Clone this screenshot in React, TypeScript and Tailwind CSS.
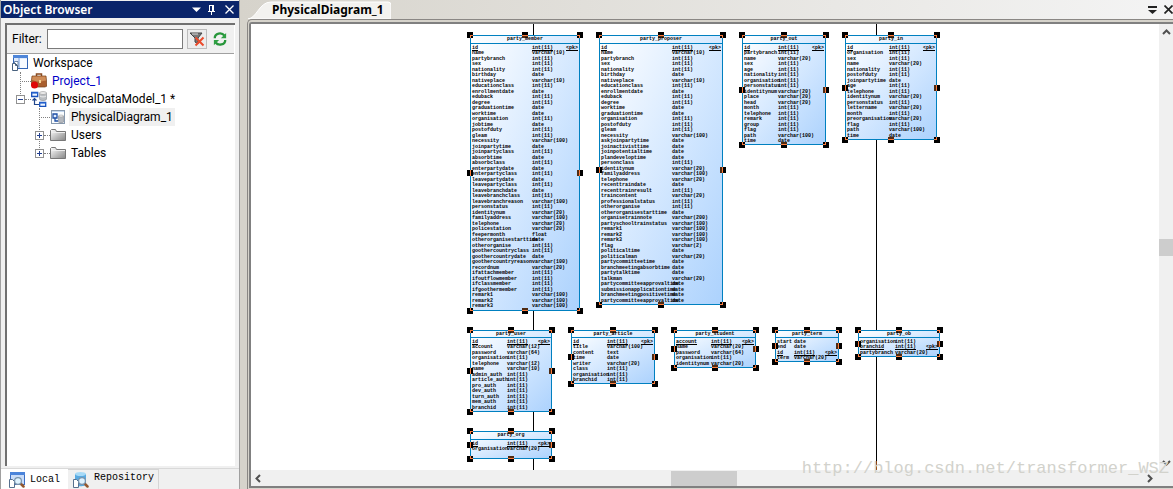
import React from "react";

type Column = { name: string; type: string; pk?: boolean };
type Entity = {
  title: string;
  x: number;
  y: number;
  w: number;
  h: number;
  nameWidth: number;
  compact?: boolean;
  columns: Column[];
};

const TYPES: Record<string, string> = {
  i: "int(11)",
  d: "date",
  f: "float",
  t: "text",
};

// Parses "name:type" pairs; a leading * marks the primary key and a number stands for varchar(n).
const parse = (source: string): Column[] =>
  source
    .trim()
    .split(/\s+/)
    .map((item) => {
      const [rawName, code] = item.split(":");
      return {
        name: rawName.replace("*", ""),
        type: TYPES[code] ?? `varchar(${code})`,
        pk: rawName.startsWith("*"),
      };
    });

const ENTITIES: Entity[] = [
  {
    title: "party_member", x: 219, y: 11, w: 110, h: 276, nameWidth: 60,
    columns: parse(`*id:i name:10 partybranch:i sex:i nationality:i birthday:d nativeplace:10
      educationclass:i enrollmentdate:d eduback:i degree:i graduationtime:d worktime:d organisation:i
      jobtime:d postofduty:i gleam:i necessity:100 joinpartytime:d joinpartyclass:i absorbtime:d
      absorbclass:i enterpartydate:d enterpartyclass:i leavepartydate:d leavepartyclass:i
      leavebranchdate:d leavebranchclass:i leavebranchreason:100 personstatus:i identitynum:20
      familyaddress:100 telephone:20 policestation:20 feepermonth:f otherorganisestarttime:d
      otherorganise:i goothercountryclass:i goothercountrydate:d goothercountryreason:100 recordnum:20
      ifattachmember:i ifoutflowmember:i ifclassmember:i ifgoothermember:i remark1:100 remark2:100
      remark3:100`),
  },
  {
    title: "party_proposer", x: 348, y: 11, w: 124, h: 270, nameWidth: 71,
    columns: parse(`*id:i name:10 partybranch:i sex:i nationality:i birthday:d nativeplace:10
      educationclass:i enrollmentdate:d eduback:i degree:i worktime:d graduationtime:d organisation:i
      postofduty:i gleam:i necessity:100 askjoinpartytime:d joinactivisttime:d joinpotentialtime:d
      plandeveloptime:d personclass:i identitynum:20 familyaddress:100 telephone:20 recenttraindate:d
      recenttrainresult:i traincontent:20 professionalstatus:i otherorganise:i
      otherorganisestarttime:d organisetrainnote:200 partyschooltrainstatus:100 remark1:100
      remark2:100 remark3:100 flag:2 politicaltime:d politicalman:20 partycommitteetime:d
      branchmeetingabsorbtime:d partytalktime:d talkman:20 partycommitteeapprovaltime:d
      submissionapplicationtime:d branchmeetingpositivetime:d partycommitteeapprovaltime:d`),
  },
  {
    title: "party_out", x: 491, y: 11, w: 84, h: 110, nameWidth: 34,
    columns: parse(`*id:i partybranch:i name:20 sex:i age:i nationality:i organisation:i personstatus:i
      identitynum:20 place:20 head:20 month:i telephone:i remark:i group:i flag:i path:100 time:d`),
  },
  {
    title: "party_in", x: 594, y: 11, w: 92, h: 105, nameWidth: 42,
    columns: parse(`*id:i organisation:i sex:i name:20 nationality:i postofduty:i joinpartytime:d age:i
      telephone:i identitynum:20 personstatus:i lettername:20 month:i preorganisation:20 flag:i
      path:100 time:d`),
  },
  {
    title: "party_user", x: 219, y: 306, w: 82, h: 82, nameWidth: 35, compact: true,
    columns: parse(`*id:i account:12 password:64 organisation:i telephone:12 name:10 admin_auth:i
      article_auth:i pro_auth:i dev_auth:i turn_auth:i mem_auth:i branchid:i`),
  },
  {
    title: "party_article", x: 320, y: 306, w: 84, h: 54, nameWidth: 34, compact: true,
    columns: parse(`*id:i title:100 content:t time:d writer:20 class:i organisation:i branchid:i`),
  },
  {
    title: "party_student", x: 423, y: 306, w: 82, h: 38, nameWidth: 35, compact: true,
    columns: parse(`*account:i name:20 password:64 organisation:i identitynum:20`),
  },
  {
    title: "party_term", x: 524, y: 306, w: 64, h: 32, nameWidth: 17, compact: true,
    columns: parse(`start:d end:d *id:i term:20`),
  },
  {
    title: "party_ob", x: 607, y: 306, w: 82, h: 27, nameWidth: 35, compact: true,
    columns: parse(`organisation:i *branchid:i partybranch:20`),
  },
  {
    title: "party_org", x: 219, y: 407, w: 82, h: 28, nameWidth: 35,
    columns: parse(`*id:i organisation:20`),
  },
];

function Handles() {
  const base = "absolute size-[6px] bg-black";
  return (
    <>
      <i className={`${base} -left-[4px] -top-[4px]`}><b className="absolute bottom-0 right-0 size-[3px] border-t border-l border-[#ff7f3f]" /></i>
      <i className={`${base} -right-[4px] -top-[4px]`}><b className="absolute bottom-0 left-0 size-[3px] border-t border-r border-[#ff7f3f]" /></i>
      <i className={`${base} -bottom-[4px] -left-[4px]`}><b className="absolute right-0 top-0 size-[3px] border-b border-l border-[#ff7f3f]" /></i>
      <i className={`${base} -bottom-[4px] -right-[4px]`}><b className="absolute left-0 top-0 size-[3px] border-r border-b border-[#ff7f3f]" /></i>
      <i className={`${base} -top-[4px] left-1/2 -ml-[3px]`}><b className="absolute bottom-[2px] left-0 h-px w-full bg-[#ff7f3f]" /><b className="absolute bottom-0 left-0 h-[2px] w-full bg-[#4f2b12]" /></i>
      <i className={`${base} -bottom-[4px] left-1/2 -ml-[3px]`}><b className="absolute left-0 top-[2px] h-px w-full bg-[#ff7f3f]" /><b className="absolute left-0 top-0 h-[2px] w-full bg-[#4f2b12]" /></i>
      <i className={`${base} -left-[4px] top-1/2 -mt-[3px]`}><b className="absolute right-[2px] top-0 h-full w-px bg-[#ff7f3f]" /></i>
      <i className={`${base} -right-[4px] top-1/2 -mt-[3px]`}><b className="absolute left-[2px] top-0 h-full w-px bg-[#ff7f3f]" /><b className="absolute left-0 top-0 h-full w-[2px] bg-[#4f2b12]" /></i>
    </>
  );
}

function EntityNode({ entity }: { entity: Entity }) {
  return (
    <article
      className="absolute border border-[#0080c0] bg-linear-to-br from-white to-[#acd2fd] font-['Liberation_Mono',monospace] text-[5px] leading-[5px] font-bold whitespace-nowrap text-black"
      style={{ left: entity.x, top: entity.y, width: entity.w, height: entity.h }}
    >
      <Handles />
      <h2 className={`relative border-b border-[#0080c0] pt-px text-center ${entity.compact ? "h-[7px]" : "h-[8px]"}`}>
        {entity.title}
      </h2>
      <ul className="relative px-px pt-[2px]">
        {entity.columns.map((column, index) => (
          <li
            key={index}
            className={`grid odd:h-[5px] even:h-[6px] ${column.pk ? "underline" : ""}`}
            style={{ gridTemplateColumns: `${entity.nameWidth}px 1fr auto` }}
          >
            <span>{column.name}</span>
            <span>{column.type}</span>
            {column.pk && <span>&lt;pk&gt;</span>}
          </li>
        ))}
      </ul>
    </article>
  );
}

function WorkspaceIcon() {
  return (
    <svg className="size-4 shrink-0" viewBox="0 0 16 16">
      <rect x="1.5" y=".5" width="14" height="13" fill="#dfeafb" stroke="#3465b4" />
      <path d="M1 0h15v3H1z" fill="#4f86d9" />
      <path d="M7 3v10" stroke="#7ca3dd" />
      <path d="M8 4h7v9H8z" fill="#f8fbff" />
      <path d="M2.5 6.5H6V12H2.500z" fill="#fff" stroke="#6d87a8" />
      <path d="M.5 8.500h3l2 2v5h-5z" fill="#fff" stroke="#48617e" />
      <path d="M3.500 8.500v2h2" fill="none" stroke="#48617e" />
    </svg>
  );
}

function BriefcaseIcon() {
  return (
    <svg className="size-4 shrink-0" viewBox="0 0 16 16">
      <path d="M5.500 3V1h5v2" fill="none" stroke="#8b4b21" strokeWidth="1.500" />
      <path d="M1 3h14l1 10-2 1H3L0 12z" fill="#a95f2e" stroke="#744018" strokeWidth=".7" />
      <path d="M1.500 3.500h13l.5 4-5 1H6L1 7z" fill="#cf8d58" />
      <rect x="8" y="7" width="2" height="3" fill="#f3d693" />
      <circle cx="3.500" cy="12" r="3.500" fill="#df0808" />
    </svg>
  );
}

function ModelIcon() {
  return (
    <svg className="size-4 shrink-0" viewBox="0 0 16 16">
      <path d="M8.500 2v6c0 2 7 2 7 0V2z" fill="#b9bdc1" stroke="#878b90" strokeWidth=".6" />
      <ellipse cx="12" cy="2" rx="3.500" ry="1.500" fill="#ececec" stroke="#999" strokeWidth=".6" />
      <path d="M9 5c1 1.200 5 1.200 6 0" fill="none" stroke="#eee" />
      <path d="M.7 1.500h6v4h-6zM8.700 11.500h6v4h-6z" fill="#eef5ff" stroke="#1751bd" strokeWidth="1.300" />
      <path d="M1 2h6M9 12h6" stroke="#2f6fd8" />
      <path d="M3.500 7v6.500H8M1.500 9.500l2-2 2 2" fill="none" stroke="#21468b" strokeWidth="1.200" />
    </svg>
  );
}

function DiagramIcon() {
  return (
    <svg className="size-4 shrink-0" viewBox="0 0 16 16">
      <rect x="1.500" y="1.500" width="13" height="13" fill="#fafdff" stroke="#8799ae" />
      <path d="M2 2.500h12" stroke="#c3d6ee" />
      <path d="M3 5h4v4H3zM5 9v3h3" fill="#e3efff" stroke="#1d4ea5" strokeWidth="1.300" />
      <path d="M8.500 7v6c0 1.300 5 1.300 5 0V7z" fill="#b4b8be" stroke="#858a92" strokeWidth=".6" />
      <ellipse cx="11" cy="7" rx="2.500" ry="1" fill="#eee" stroke="#999" strokeWidth=".5" />
    </svg>
  );
}

function FolderIcon() {
  return (
    <svg className="size-4 shrink-0" viewBox="0 0 16 16">
      <defs>
        <linearGradient id="folder" x2="1" y2="1">
          <stop stopColor="#fff" />
          <stop offset="1" stopColor="#858585" />
        </linearGradient>
      </defs>
      <path d="M.5 13.500v-10l1-1h4l1 2h9v9z" fill="url(#folder)" stroke="#777" />
      <path d="M1 5.500h14" stroke="#eee" />
    </svg>
  );
}

function SearchTabIcon({ repository }: { repository?: boolean }) {
  return (
    <svg className="size-4 shrink-0" viewBox="0 0 16 16">
      {repository ? (
        <>
          <path d="M2 2v10c0 3 11 3 11 0V2z" fill="#58a9e0" />
          <ellipse cx="7.500" cy="2" rx="5.500" ry="2" fill="#a7daf7" />
        </>
      ) : (
        <>
          <rect x="1.500" y=".5" width="14" height="12" fill="#c9dcf8" stroke="#3c6fc4" />
          <path d="M1 0h15v3H1z" fill="#4b84da" />
        </>
      )}
      <path d="M.5 7.500h3l2 2v6h-5z" fill="#fff" stroke="#57718f" />
      <path d="m11.500 11.500 3 3" stroke="#94582f" strokeWidth="2.500" strokeLinecap="round" />
      <circle cx="9" cy="9" r="3.400" fill="#dff3ff" stroke="#7892aa" strokeWidth="1.200" />
    </svg>
  );
}

function Expander({ open }: { open?: boolean }) {
  return (
    <button aria-label={open ? "Collapse" : "Expand"} className="size-[9px] shrink-0">
      <svg className="size-[9px]" viewBox="0 0 9 9">
        <rect x=".5" y=".5" width="8" height="8" fill="#fff" stroke="#919191" />
        <path d={open ? "M2 4.500h5" : "M2 4.500h5M4.500 2v5"} stroke="#223f8f" />
      </svg>
    </button>
  );
}

function Tree() {
  const row = "flex h-[18px] items-center";
  const dots = "border-t border-dotted border-[#808080]";
  return (
    <ul className="relative pl-[5px] font-['Roboto',sans-serif] text-[12px] whitespace-nowrap text-black">
      <li className={row}><WorkspaceIcon /><span className="ml-[5px]">Workspace</span></li>
      <li className={`${row} pl-[8px]`}><i className={`${dots} w-[11px]`} /><BriefcaseIcon /><span className="ml-[5px] text-[#0000c8]">Project_1</span></li>
      <li className={`${row} pl-[4px]`}><Expander open /><i className={`${dots} w-[6px]`} /><ModelIcon /><span className="ml-[5px]">PhysicalDataModel_1 *</span></li>
      <li className={`${row} pl-[27px]`}><i className={`${dots} w-[11px]`} /><DiagramIcon /><span className="ml-[3px] bg-[#f0f0f0] px-[2px] leading-[18px]">PhysicalDiagram_1</span></li>
      <li className={`${row} pl-[23px]`}><Expander /><i className={`${dots} w-[6px]`} /><FolderIcon /><span className="ml-[5px]">Users</span></li>
      <li className={`${row} pl-[23px]`}><Expander /><i className={`${dots} w-[6px]`} /><FolderIcon /><span className="ml-[5px]">Tables</span></li>
      <li aria-hidden="true" className="absolute top-[18px] left-[13px] h-[24px] border-l border-dotted border-[#808080]" />
      <li aria-hidden="true" className="absolute top-[54px] left-[32px] h-[24px] border-l border-dotted border-[#808080]" />
      <li aria-hidden="true" className="absolute top-[87px] left-[32px] h-[9px] border-l border-dotted border-[#808080]" />
    </ul>
  );
}

function ObjectBrowser() {
  return (
    <aside className="flex w-[240px] shrink-0 flex-col border-r border-l border-[#a0a0a0] bg-[#f0f0f0] pt-px">
      <header className="flex h-[17px] items-center bg-[#0a246a] pr-[4px] pl-[2px] text-white">
        <h1 className="flex-1 text-[12px] leading-[17px] font-semibold">Object Browser</h1>
        <button aria-label="Window menu" className="mr-[6px]"><svg className="h-[9px] w-[9px]" viewBox="0 0 9 9"><path d="M0 2.500h9L4.500 7z" fill="#fff" /></svg></button>
        <button aria-label="Pin" className="mr-[8px]"><svg className="h-[11px] w-[9px]" viewBox="0 0 9 11"><path d="M2.500 1v6M6.500 1v6M2 1.500h5M1 7.500h7M4.500 8v3M5.500 1v6" stroke="#fff" fill="none" /></svg></button>
        <button aria-label="Close"><svg className="size-[11px]" viewBox="0 0 11 11"><path d="m1.500 1.500 8 8m0-8-8 8" stroke="#fff" strokeWidth="1.300" /></svg></button>
      </header>
      <div className="mr-[4px] ml-[4px] mt-[5px] flex flex-1 flex-col border-t-2 border-l-2 border-[#707070] bg-white">
        <div className="mr-px flex h-[29px] items-center border-b border-[#a0a0a0] bg-[#f0f0f0] pl-[5px] text-[12px]">
          <label htmlFor="filter" className="w-[35px] font-['Roboto',sans-serif]">Filter:</label>
          <input id="filter" type="text" className="h-[20px] min-w-0 flex-1 border border-[#7a7a7a] bg-white px-1 outline-none" />
          <button aria-label="Clear filter" className="ml-[4px] flex size-5 items-center justify-center border border-[#bcbcbc] bg-[#ececec]">
            <svg className="size-4" viewBox="0 0 16 16">
              <path d="M1 2h12L9 7v6l-3-2V7z" fill="#777" stroke="#444" />
              <path d="M3 3h6" stroke="#ddd" />
              <path d="m6.500 6.500 8 8m0-8-8 8" stroke="#ea4a2a" strokeWidth="2" />
            </svg>
          </button>
          <button aria-label="Refresh" className="mr-[6px] ml-[4px] flex size-[17px] items-center justify-center">
            <svg className="size-[14px]" viewBox="0 0 16 16">
              <path d="M2 7c0-6 8-7 11-3M14 9c0 6-8 7-11 3" fill="none" stroke="#27963a" strokeWidth="2.600" />
              <path d="M15 1v6H9zM1 15V9h6z" fill="#2fa043" />
            </svg>
          </button>
        </div>
        <Tree />
      </div>
      <nav className="mt-[2px] flex h-[21px] shrink-0 border-t border-[#d9d9d9] font-['Liberation_Mono',monospace] text-[10px] leading-[16px] text-black">
        <button className="flex w-[67px] items-center bg-white pt-[2px] pl-[8px]"><SearchTabIcon /><span className="ml-[5px]">Local</span></button>
        <button className="flex w-[91px] items-center border-t border-r border-[#d5d5d5] pl-[5px]"><SearchTabIcon repository /><span className="ml-[5px] pb-[4px]">Repository</span></button>
      </nav>
    </aside>
  );
}

function Chevron({ path, label }: { path: string; label: string }) {
  return (
    <button aria-label={label} className="flex size-[15px] shrink-0 items-center justify-center">
      <svg className="size-[9px]" viewBox="0 0 9 9"><path d={path} fill="none" stroke="#505050" strokeWidth="2" /></svg>
    </button>
  );
}

export default function App() {
  return (
    <div className="flex h-screen overflow-hidden bg-[#d6d3cb] font-['Noto_Sans','Open_Sans',sans-serif]">
      <ObjectBrowser />
      <main className="flex min-w-0 flex-1 flex-col">
        <header className="flex h-[19px] shrink-0 items-end bg-linear-to-r from-[#d6d3cb] to-[#f4f4f4]">
          <div className="relative ml-[8px] flex h-[18px] w-[143px] items-center">
            <svg className="absolute inset-0 size-full" viewBox="0 0 143 18" preserveAspectRatio="none">
              <path d="M0 18C9 17 11 1 23 1h117q3 0 3 3v14z" fill="#f3f2ef" stroke="#fff" />
            </svg>
            <h2 className="relative pl-[24px] text-[12px] leading-[16px] font-bold text-black">PhysicalDiagram_1</h2>
          </div>
          <div className="ml-auto flex h-full items-center gap-[7px]">
            <button aria-label="Open tabs"><svg className="h-[9px] w-[9px]" viewBox="0 0 9 9"><path d="M0 1h9v2H0zM0 5h9L4.500 9z" fill="#222" /></svg></button>
            <button aria-label="Close diagram"><svg className="size-[9px]" viewBox="0 0 9 9"><path d="m.5.5 8 8m0-8-8 8" stroke="#222" strokeWidth="1.700" /></svg></button>
          </div>
        </header>
        <div className="ml-[7px] flex min-h-0 flex-1 flex-col rounded-tl-[5px] border-t border-l border-[#8a8784] pt-[2px] pl-px">
          <section className="flex min-h-0 flex-1 flex-col rounded-tl-[3px] border-y-2 border-l-2 border-[#808080] bg-[#f0f0f0]">
            <div className="flex min-h-0 flex-1">
              <div className="relative min-w-0 flex-1 overflow-hidden bg-white">
                <i className="absolute inset-y-0 left-[282px] w-px bg-black" />
                <i className="absolute inset-y-0 left-[625px] w-px bg-black" />
                {ENTITIES.map((entity) => <EntityNode key={entity.title} entity={entity} />)}
              </div>
              <div className="flex w-[14px] shrink-0 flex-col items-center bg-[#f0f0f0] pt-px">
                <Chevron label="Scroll up" path="m1 6 3.500-3.500L8 6" />
                <div className="flex w-full flex-1 flex-col">
                  <i className="flex-1" />
                  <i className="h-[17px] bg-[#cdcdcd]" />
                  <i className="flex-1" />
                </div>
                <Chevron label="Scroll down" path="m1 3 3.500 3.500L8 3" />
              </div>
            </div>
            <div className="flex h-[16px] shrink-0 items-center pr-[16px]">
              <Chevron label="Scroll left" path="M6 1 2.500 4.500 6 8" />
              <div className="flex h-[15px] flex-1">
                <i className="flex-1" />
                <i className="w-[66px] bg-[#cdcdcd]" />
                <i className="flex-1" />
              </div>
              <Chevron label="Scroll right" path="m3 1 3.500 3.500L3 8" />
            </div>
          </section>
          <i className="h-px shrink-0" />
        </div>
      </main>
      <p className="absolute right-[4px] bottom-[8px] font-['Liberation_Mono',monospace] text-[17px] leading-[24px] text-[#d2d2cc]">http://blog.csdn.net/transformer_WSZ</p>
    </div>
  );
}
